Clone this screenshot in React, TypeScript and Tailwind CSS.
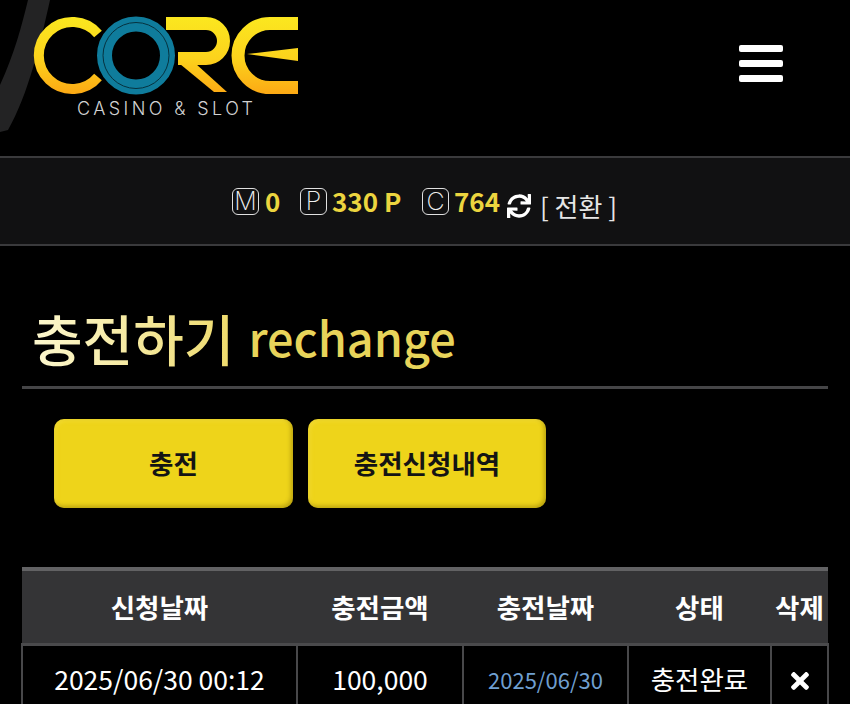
import { FaSync, FaTimes } from "react-icons/fa";

const font = "font-['Noto_Sans_CJK_KR','Noto_Sans',sans-serif]";

function Logo() {
  return (
    <svg width="320" height="140" viewBox="0 0 320 140" fill="none">
      <defs>
        <linearGradient id="gold" x1="0" y1="16" x2="0" y2="94" gradientUnits="userSpaceOnUse">
          <stop offset="0" stopColor="#fbe81f" />
          <stop offset="0.55" stopColor="#fcd21c" />
          <stop offset="1" stopColor="#fca914" />
        </linearGradient>
      </defs>
      {/* swoosh behind the logo */}
      <path d="M28 0 L50 0 C40 45 28 95 8 130 L0 132 L0 85 C14 55 22 25 28 0 Z" fill="#232324" />
      {/* C */}
      <path d="M98 34 A33.5 33.5 0 1 0 98 77" stroke="url(#gold)" strokeWidth="10" />
      {/* R */}
      <path d="M166 23.5 H206 A17.5 17.5 0 0 1 206 58.5 H178" stroke="url(#gold)" strokeWidth="13" />
      <path d="M180 64 H196 L227 92 H214 Z" fill="url(#gold)" />
      {/* E */}
      <path d="M298 23.5 H270 A32 32 0 0 0 270 87.5 H298" stroke="url(#gold)" strokeWidth="13" />
      <path d="M247 54 L298 48 V61 Z" fill="url(#gold)" />
      {/* O */}
      <circle cx="136" cy="55.5" r="31.5" stroke="#0f7c9c" strokeWidth="15" />
      <circle cx="136" cy="55.5" r="33" stroke="#06323f" strokeWidth="1" />
      <text
        x="77"
        y="115"
        fill="#d2d2d2"
        fontFamily="Inter, sans-serif"
        fontWeight="300"
        fontSize="18"
        letterSpacing="3.4"
      >
        CASINO &amp; SLOT
      </text>
    </svg>
  );
}

function Badge({ letter }: { letter: string }) {
  return (
    <span className="flex h-[27px] w-[27px] items-center justify-center rounded-[6px] border border-[#e0e0e0] font-['Inter',sans-serif] text-[25px] leading-none font-extralight text-[#f0f0f0]">
      {letter}
    </span>
  );
}

function StatusBar() {
  return (
    <div className="flex h-[90px] items-center justify-center border-y-2 border-[#3a3a3c] bg-[#111112]">
      <div className="flex items-center text-[26px] leading-none font-bold text-[#ecd53f]">
        <Badge letter="M" />
        <span className="ml-[6px] w-[35px]">0</span>
        <Badge letter="P" />
        <span className="ml-[5px] w-[90px] whitespace-nowrap">330 P</span>
        <Badge letter="C" />
        <span className="ml-[5px] w-[45px]">764</span>
        <span className="mt-[9px] ml-[8px] flex items-center text-white">
          <FaSync size={24} />
          <span className="ml-[9px] w-[78px] text-[26px] font-normal whitespace-nowrap text-[#e6e6e6]">
            [ 전환 ]
          </span>
        </span>
      </div>
    </div>
  );
}

function YellowButton({ label }: { label: string }) {
  return (
    <button className="flex h-[89px] items-center justify-center rounded-[10px] bg-[#eed41a] pb-[2px] text-[26.5px] font-semibold text-[#141414] shadow-[inset_-2px_-2px_4px_rgba(120,100,0,0.45),inset_2px_2px_4px_rgba(255,240,120,0.25)]">
      {label}
    </button>
  );
}

const headers = ["신청날짜", "충전금액", "충전날짜", "상태", "삭제"];

function App() {
  return (
    <div className={`h-screen overflow-hidden bg-black ${font}`}>
      <header className="flex h-[156px] items-start justify-between pr-[67px]">
        <Logo />
        <div className="mt-[45px] flex w-[44px] flex-col gap-[8px]">
          <div className="h-[7px] rounded-[2px] bg-white" />
          <div className="h-[7px] rounded-[2px] bg-white" />
          <div className="h-[7px] rounded-[2px] bg-white" />
        </div>
      </header>

      <StatusBar />

      <main className="px-[22px]">
        <h1 className="flex h-[140px] items-end pb-[14px] pl-[10px] leading-none font-medium">
          <span className="bg-gradient-to-r from-[#fdf8cf] to-[#eeda6a] bg-clip-text text-[55px] leading-[70px] text-transparent">
            충전하기
          </span>
          <span className="ml-[14px] text-[46.8px] leading-[70px] text-[#e8d45a]">rechange</span>
        </h1>
        <div className="h-[3px] w-[806px] bg-[#454547]" />

        <div className="mt-[30px] grid grid-cols-[239px_238px] gap-[15px] pl-[32px]">
          <YellowButton label="충전" />
          <YellowButton label="충전신청내역" />
        </div>

        <table className="mt-[59px] -ml-px w-[806px] table-fixed border-collapse text-center text-[26.5px] text-white">
          <colgroup>
            <col className="w-[275px]" />
            <col className="w-[166px]" />
            <col className="w-[165px]" />
            <col className="w-[143px]" />
            <col className="w-[57px]" />
          </colgroup>
          <thead>
            <tr className="h-[75px] border-t-[4px] border-b-[3px] border-t-[#626264] border-b-[#4a4a4c] bg-[#343436]">
              {headers.map((h) => (
                <th key={h} className="p-0 font-semibold whitespace-nowrap">
                  {h}
                </th>
              ))}
            </tr>
          </thead>
          <tbody>
            <tr className="h-[70px]">
              <td className="border-2 border-[#48484a] p-0 whitespace-nowrap">2025/06/30 00:12</td>
              <td className="border-2 border-[#48484a] p-0">100,000</td>
              <td className="border-2 border-[#48484a] p-0 text-[22px] text-[#6f9fd0]">2025/06/30</td>
              <td className="border-2 border-[#48484a] p-0">충전완료</td>
              <td className="border-2 border-[#48484a] p-0">
                <FaTimes size={26} className="mx-auto mt-[3px]" />
              </td>
            </tr>
          </tbody>
        </table>
      </main>
    </div>
  );
}

export default App;
